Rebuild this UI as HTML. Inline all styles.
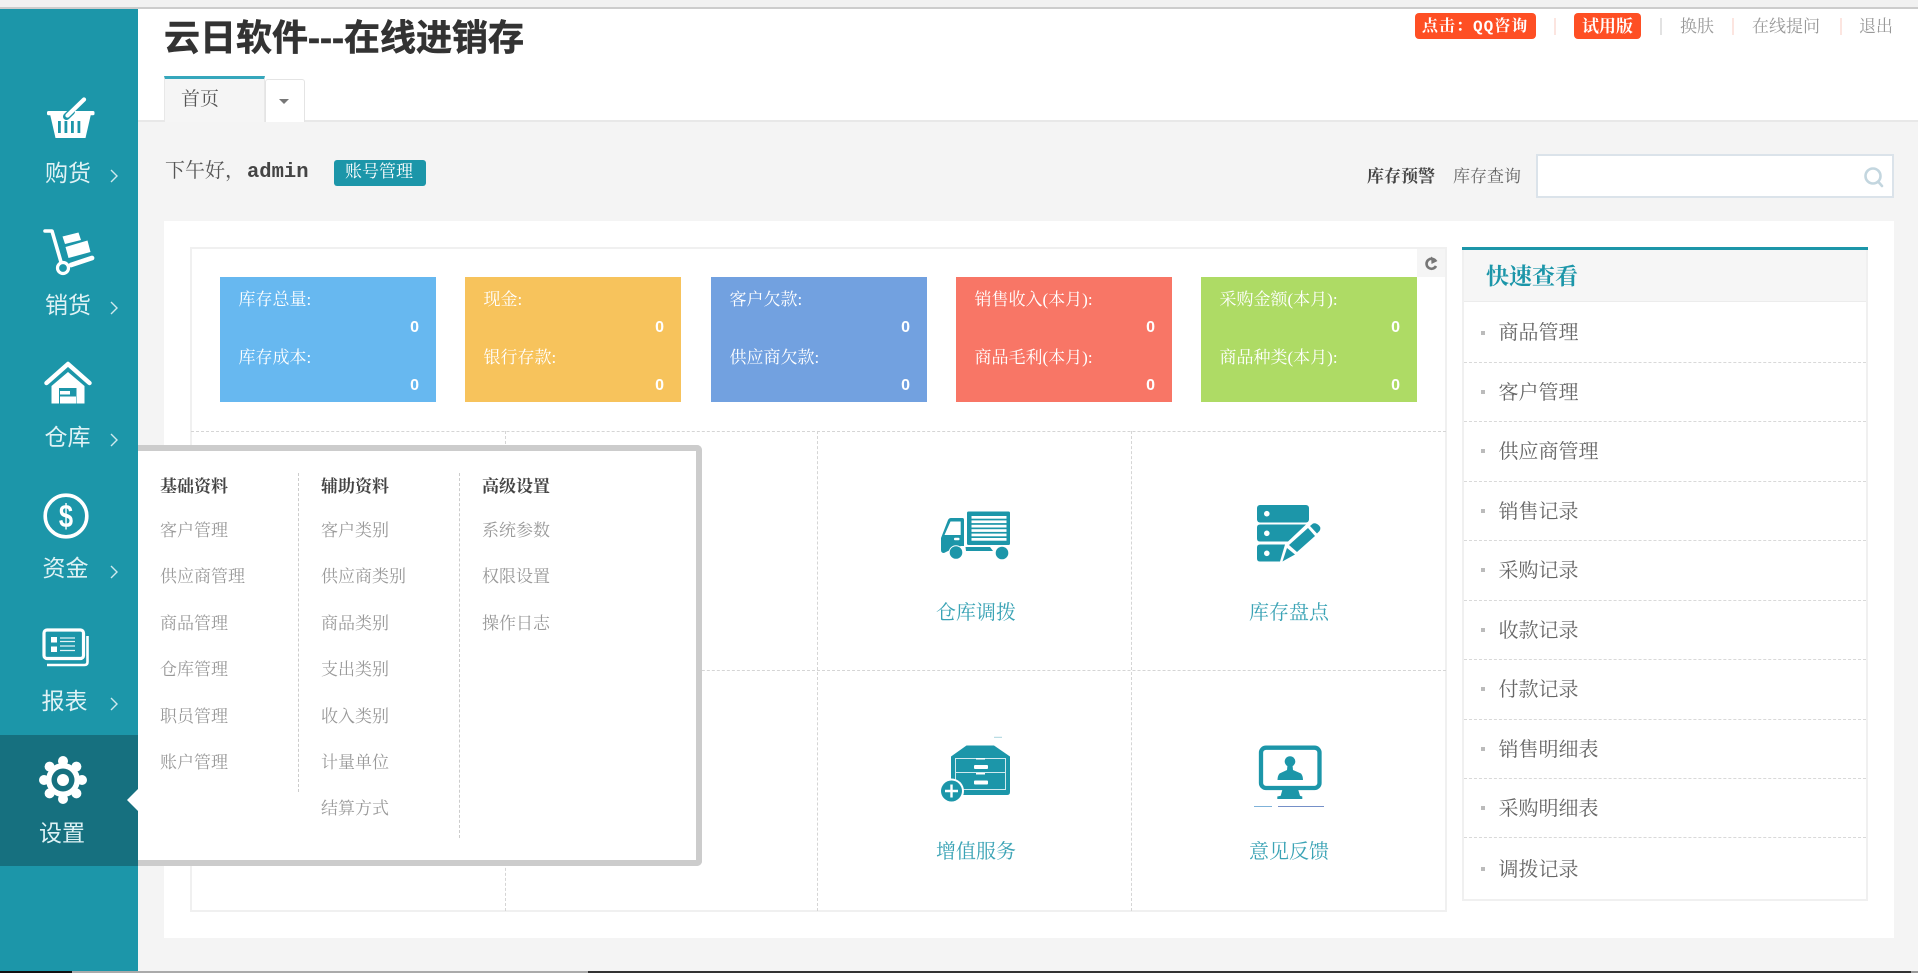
<!DOCTYPE html>
<html lang="zh"><head><meta charset="utf-8"><title>云日软件</title>
<style>
html,body{margin:0;padding:0;width:1918px;height:973px;overflow:hidden;background:#f4f4f4}
body{position:relative;font-family:"Liberation Serif","Noto Serif CJK SC",serif}
div,span.t{position:absolute;box-sizing:border-box}
.t{position:absolute;white-space:nowrap;line-height:1}
.s{font-family:"Liberation Sans","Noto Sans CJK SC",sans-serif}
.side{color:#dff2f5;font-size:23px;font-family:"Liberation Sans","Noto Sans CJK SC",sans-serif}
.card{top:277px;width:216px;height:125px}
.lab{color:#fff;font-size:17px;left:18.500px}
.val{color:#fff;font:bold 16px "Liberation Sans",sans-serif;right:17px}
.pi{color:#999;font-size:17px}
.ph{color:#444;font-size:17px;font-weight:bold}
.qi{color:#666;font-size:20px;left:1499px}
.bul{left:1481px;width:4px;height:4px;background:#bbb}
.qs{left:1464px;width:402px;border-top:1px dashed #d9d9d9;height:0}
.gl{color:#3aa3b5;font-size:20px}
.sep{top:18px;width:2px;height:17px}
.lnk{color:#999;font-size:17px;top:18px}
</style></head><body>
<div style="left:0;top:0;width:1918px;height:7px;background:#f1f1f1"></div>
<div style="left:0;top:7px;width:1918px;height:2px;background:#ccc"></div>
<div style="left:138px;top:9px;width:1780px;height:113px;background:#fff;border-bottom:2px solid #e8e8e8"></div>

<span class="t s" style="left:164px;top:20px;font-size:36px;font-weight:bold;color:#333;-webkit-text-stroke:.6px #333">云日软件---在线进销存</span>

<div style="left:164px;top:76px;width:101px;height:46px;background:#f5f5f5;border-top:3px solid #36a7bc;border-left:1px solid #e8e8e8;border-right:1px solid #e8e8e8"></div>
<span class="t" style="left:181px;top:90px;font-size:19px;color:#555">首页</span>
<div style="left:265px;top:79px;width:40px;height:43px;background:#fff;border:1px solid #e4e4e4;border-bottom:0;border-radius:3px 3px 0 0"></div>
<div style="left:279px;top:99px;width:0;height:0;border-left:5px solid transparent;border-right:5px solid transparent;border-top:5px solid #777"></div>

<div style="left:1415px;top:13px;width:121px;height:26px;background:#fe4f24;border-radius:4px"></div>
<span class="t" style="left:1422px;top:19px;font-size:16px;letter-spacing:1px;font-weight:bold;color:#fff;font-family:'Liberation Mono','Noto Serif CJK SC',serif">点击：QQ咨询</span>
<div style="left:1574px;top:13px;width:67px;height:26px;background:#fe4f24;border-radius:4px"></div>
<span class="t" style="left:1582px;top:18px;font-size:17px;font-weight:bold;color:#fff">试用版</span>
<div class="sep" style="left:1554px;background:#fce5e0"></div>
<div class="sep" style="left:1660px;background:#e2e2e2"></div>
<div class="sep" style="left:1732px;background:#fce5e0"></div>
<div class="sep" style="left:1840px;background:#fce5e0"></div>
<span class="t lnk" style="left:1680px">换肤</span>
<span class="t lnk" style="left:1752px">在线提问</span>
<span class="t lnk" style="left:1859px">退出</span>

<span class="t" style="left:165px;top:161px;font-size:20px;color:#555">下午好，</span>
<span class="t" style="left:247px;top:161px;font:bold 20.500px 'Liberation Mono',monospace;color:#444">admin</span>
<div style="left:334px;top:160px;width:92px;height:26px;background:#1c96a9;border-radius:3px"></div>
<span class="t" style="left:345px;top:163px;font-size:17px;color:#fff">账号管理</span>

<span class="t" style="left:1367px;top:168px;font-size:17px;font-weight:bold;color:#444">库存预警</span>
<span class="t" style="left:1453px;top:168px;font-size:17px;color:#666">库存查询</span>
<div style="left:1536px;top:154px;width:358px;height:44px;background:#fff;border:2px solid #dbe3ea"></div>

<div style="left:164px;top:221px;width:1730px;height:717px;background:#fff"></div>
<div style="left:190px;top:247px;width:1257px;height:665px;border:2px solid #f0f0f0"></div>
<div style="left:1417px;top:249px;width:28px;height:28px;background:#f5f5f5"></div>

<div class="card" style="left:220px;background:#67b8f0">
<span class="t lab" style="top:14px">库存总量:</span><span class="t val" style="top:42px">0</span>
<span class="t lab" style="top:72px">库存成本:</span><span class="t val" style="top:100px">0</span></div>
<div class="card" style="left:465px;background:#f7c35c">
<span class="t lab" style="top:14px">现金:</span><span class="t val" style="top:42px">0</span>
<span class="t lab" style="top:72px">银行存款:</span><span class="t val" style="top:100px">0</span></div>
<div class="card" style="left:711px;background:#72a1e0">
<span class="t lab" style="top:14px">客户欠款:</span><span class="t val" style="top:42px">0</span>
<span class="t lab" style="top:72px">供应商欠款:</span><span class="t val" style="top:100px">0</span></div>
<div class="card" style="left:956px;background:#f87666">
<span class="t lab" style="top:14px">销售收入(本月):</span><span class="t val" style="top:42px">0</span>
<span class="t lab" style="top:72px">商品毛利(本月):</span><span class="t val" style="top:100px">0</span></div>
<div class="card" style="left:1201px;background:#aedb65">
<span class="t lab" style="top:14px">采购金额(本月):</span><span class="t val" style="top:42px">0</span>
<span class="t lab" style="top:72px">商品种类(本月):</span><span class="t val" style="top:100px">0</span></div>

<div style="left:191px;top:431px;width:1255px;height:0;border-top:1px dashed #d5d5d5"></div>
<div style="left:191px;top:670px;width:1255px;height:0;border-top:1px dashed #d5d5d5"></div>
<div style="left:505px;top:431px;width:0;height:480px;border-left:1px dashed #d5d5d5"></div>
<div style="left:817px;top:431px;width:0;height:480px;border-left:1px dashed #d5d5d5"></div>
<div style="left:1131px;top:431px;width:0;height:480px;border-left:1px dashed #d5d5d5"></div>
<span class="t gl" style="left:936px;top:603px">仓库调拨</span>
<span class="t gl" style="left:1249px;top:603px">库存盘点</span>
<span class="t gl" style="left:936px;top:842px">增值服务</span>
<span class="t gl" style="left:1249px;top:842px">意见反馈</span>

<div style="left:1462px;top:247px;width:406px;height:654px;background:#fff;border:2px solid #f0f0f0;border-top:0"></div>
<div style="left:1462px;top:247px;width:406px;height:3px;background:#1c96a9"></div>
<div style="left:1464px;top:250px;width:402px;height:52px;background:#f6f6f6;border-bottom:1px solid #ececec"></div>
<span class="t" style="left:1486px;top:265px;font-size:23px;color:#1c96a9;font-weight:bold">快速查看</span>
<div class="qs" style="top:362px"></div><div class="qs" style="top:421px"></div><div class="qs" style="top:481px"></div><div class="qs" style="top:540px"></div><div class="qs" style="top:600px"></div><div class="qs" style="top:659px"></div><div class="qs" style="top:719px"></div><div class="qs" style="top:778px"></div><div class="qs" style="top:837px"></div>
<div class="bul" style="top:331px"></div><span class="t qi" style="left:1498.500px;top:323px">商品管理</span>
<div class="bul" style="top:390px"></div><span class="t qi" style="left:1498.500px;top:383px">客户管理</span>
<div class="bul" style="top:449px"></div><span class="t qi" style="left:1498.500px;top:442px">供应商管理</span>
<div class="bul" style="top:509px"></div><span class="t qi" style="left:1498.500px;top:502px">销售记录</span>
<div class="bul" style="top:568px"></div><span class="t qi" style="left:1498.500px;top:561px">采购记录</span>
<div class="bul" style="top:628px"></div><span class="t qi" style="left:1498.500px;top:621px">收款记录</span>
<div class="bul" style="top:687px"></div><span class="t qi" style="left:1498.500px;top:680px">付款记录</span>
<div class="bul" style="top:747px"></div><span class="t qi" style="left:1498.500px;top:740px">销售明细表</span>
<div class="bul" style="top:806px"></div><span class="t qi" style="left:1498.500px;top:799px">采购明细表</span>
<div class="bul" style="top:867px"></div><span class="t qi" style="left:1498.500px;top:860px">调拨记录</span>

<div style="left:0;top:9px;width:138px;height:964px;background:#1c96a9"></div>
<div style="left:0;top:735px;width:138px;height:131px;background:#16707f"></div>
<span class="t side" style="left:45px;top:162px">购货</span>
<span class="t side" style="left:45px;top:294px">销货</span>
<span class="t side" style="left:44.500px;top:426px">仓库</span>
<span class="t side" style="left:42.500px;top:557px">资金</span>
<span class="t side" style="left:41.500px;top:690px">报表</span>
<span class="t side" style="left:39px;top:822px">设置</span>

<div style="left:138px;top:445px;width:564px;height:421px;background:#fff;border:6px solid #ccc;border-left:0;border-radius:0 5px 5px 0"></div>
<div style="left:298px;top:473px;width:0;height:319px;border-left:1px dashed #ccc"></div>
<div style="left:459px;top:473px;width:0;height:365px;border-left:1px dashed #ccc"></div>
<span class="t ph" style="left:160px;top:478px">基础资料</span>
<span class="t ph" style="left:321px;top:478px">辅助资料</span>
<span class="t ph" style="left:482px;top:478px">高级设置</span>
<span class="t pi" style="left:160px;top:522px">客户管理</span>
<span class="t pi" style="left:160px;top:568px">供应商管理</span>
<span class="t pi" style="left:160px;top:615px">商品管理</span>
<span class="t pi" style="left:160px;top:661px">仓库管理</span>
<span class="t pi" style="left:160px;top:708px">职员管理</span>
<span class="t pi" style="left:160px;top:754px">账户管理</span>
<span class="t pi" style="left:321px;top:522px">客户类别</span>
<span class="t pi" style="left:321px;top:568px">供应商类别</span>
<span class="t pi" style="left:321px;top:615px">商品类别</span>
<span class="t pi" style="left:321px;top:661px">支出类别</span>
<span class="t pi" style="left:321px;top:708px">收入类别</span>
<span class="t pi" style="left:321px;top:754px">计量单位</span>
<span class="t pi" style="left:321px;top:800px">结算方式</span>
<span class="t pi" style="left:482px;top:522px">系统参数</span>
<span class="t pi" style="left:482px;top:568px">权限设置</span>
<span class="t pi" style="left:482px;top:615px">操作日志</span>

<svg style="position:absolute;left:0;top:0" width="1918" height="973" viewBox="0 0 1918 973">
<!-- notch -->
<path d="M138 789L127 800L138 811Z" fill="#fff"/>
<!-- chevrons -->
<g fill="none" stroke="#cfe9ee" stroke-width="1.400">
<path d="M111 170l6 6-6 6"/><path d="M111 302l6 6-6 6"/><path d="M111 434l6 6-6 6"/><path d="M111 566l6 6-6 6"/><path d="M111 698l6 6-6 6"/>
</g>
<!-- basket -->
<g fill="#fff">
<rect x="47" y="111" width="47.500" height="4.200" rx="1.500"/>
<path d="M50 114H91L85.500 138H55.500Z"/>
<path d="M66.500 116.500L84 99.500" stroke="#1c96a9" stroke-width="7" stroke-linecap="round" stroke-dasharray="7 100"/>
<path d="M67.500 115.500L84 99.500" stroke="#fff" stroke-width="4.300" stroke-linecap="round"/>
<g fill="#1c96a9"><rect x="58" y="121" width="2.800" height="12"/><rect x="64.500" y="121" width="2.800" height="12"/><rect x="71" y="121" width="2.800" height="12"/><rect x="77.500" y="121" width="2.800" height="12"/></g>
</g>
<!-- cart -->
<g>
<path d="M45 231H52L61 262" fill="none" stroke="#fff" stroke-width="3.600" stroke-linecap="round" stroke-linejoin="round"/>
<circle cx="63" cy="268" r="5.500" fill="none" stroke="#fff" stroke-width="3.200"/>
<path d="M71 265L92 258" stroke="#fff" stroke-width="4.800" stroke-linecap="round"/>
<path d="M62.500 236.500L78.500 232.500L81 240L65 244Z" fill="#fff"/>
<path d="M65.500 247L87.500 240.500L90.500 252L68.500 258Z" fill="#fff"/>
</g>
<!-- house -->
<g>
<path d="M46.500 383L68 364L89.500 383" fill="none" stroke="#fff" stroke-width="4.500" stroke-linecap="round" stroke-linejoin="round"/>
<path d="M51.500 386L68 372L84.500 386V403.500H76.500V388H59V403.500H51.500Z" fill="#fff"/>
<rect x="60" y="391" width="10" height="3.500" fill="#fff"/><rect x="60" y="396.500" width="16" height="7" fill="#fff"/>
</g>
<!-- dollar -->
<circle cx="66" cy="516" r="20.800" fill="none" stroke="#fff" stroke-width="3.600"/>
<text transform="translate(66 527) scale(.85 1.080)" text-anchor="middle" font-family="Liberation Sans" font-weight="bold" font-size="30" fill="#fff">$</text>
<!-- report -->
<g fill="none" stroke="#fff">
<rect x="44" y="630" width="39.500" height="28.500" rx="3" stroke-width="3.200"/>
<path d="M87.500 636V662Q87.500 665 84.500 665H47" stroke-width="2.600"/>
<g stroke-width="1.300" stroke="#e4f4f6"><path d="M60 638H75M60 641.500H75M60 646H75M60 650.500H75"/></g>
</g>
<rect x="51" y="637" width="6" height="5.500" fill="#fff"/><rect x="51" y="646.500" width="6" height="5.500" fill="#fff"/>
<!-- gear -->
<g fill="#fff">
<circle cx="63" cy="780" r="17"/>
<circle cx="63" cy="761" r="5"/><circle cx="63" cy="799" r="5"/><circle cx="44" cy="780" r="5"/><circle cx="82" cy="780" r="5"/>
<circle cx="49.600" cy="766.600" r="5"/><circle cx="76.400" cy="766.600" r="5"/><circle cx="49.600" cy="793.400" r="5"/><circle cx="76.400" cy="793.400" r="5"/>
<circle cx="63" cy="780" r="11.500" fill="#16707f"/><circle cx="63" cy="780" r="6"/>
</g>
<!-- magnifier -->
<g fill="none" stroke="#c3d6df" stroke-width="2.600"><circle cx="1873" cy="176" r="7.500"/><path d="M1878.500 182L1882 186" stroke-linecap="round"/></g>
<!-- refresh -->
<path d="M1436 261.500A5 5 0 1 0 1436 266" fill="none" stroke="#777" stroke-width="2.600"/>
<path d="M1431 256.500L1437.500 261L1431.500 264Z" fill="#777"/>
<!-- truck -->
<g fill="#1c96a9">
<rect x="967" y="511.500" width="43" height="33.500" rx="1.500"/>
<g fill="#fff"><rect x="971.500" y="516" width="35" height="2.700"/><rect x="971.500" y="520.400" width="35" height="2.700"/><rect x="971.500" y="524.800" width="35" height="2.700"/><rect x="971.500" y="529.200" width="35" height="2.700"/><rect x="971.500" y="533.600" width="35" height="2.700"/><rect x="971.500" y="538" width="35" height="2.700"/></g>
<path d="M941 538L948 520Q949 518 951 518H962.500Q964 518 964 520V546H961L952 549L944 553Q941 553 941 550Z"/>
<path d="M944.500 535L950.500 521.500H960.700V535Z" fill="#fff"/>
<rect x="954" y="537.800" width="5.500" height="2.500" rx="1" fill="#fff"/>
<circle cx="956" cy="552.500" r="6.800" stroke="#fff" stroke-width="1"/><circle cx="1002" cy="553" r="6.300"/>
<path d="M965.500 547H990L993 551H966Z"/>
</g>
<!-- server pencil -->
<g fill="#1c96a9">
<rect x="1257" y="505" width="52" height="17.500" rx="3"/>
<path d="M1260 524.500H1306L1288 541.500H1260Q1257 541.500 1257 538.500V527.500Q1257 524.500 1260 524.500Z"/>
<path d="M1260 544.500H1285L1280 561.500H1260Q1257 561.500 1257 558.500V547.500Q1257 544.500 1260 544.500Z"/>
<g fill="#fff"><circle cx="1266.800" cy="513.700" r="2.800"/><circle cx="1266.800" cy="533.300" r="2.800"/><circle cx="1266.800" cy="553.300" r="2.800"/></g>
<path d="M1289 545L1308 528L1315 536L1297 552Z"/>
<path d="M1310 526L1313 523.500Q1316 522.500 1319 525.500Q1321.500 528 1319.500 531L1317 533.500Z"/>
<path d="M1287 548L1295 554.500L1285 560L1282.500 561.500Z"/>
</g>
<!-- drawer -->
<g fill="#1c96a9">
<path d="M966.500 745.500H994L1010 756.500V792Q1010 795 1007 795H955Q951 795 951 791V756.500Z"/>
<path d="M955.500 758.500H1005.500V789.500H955.500Z M955.500 772.500H1005.500" fill="none" stroke="#cfe9ee" stroke-width="1"/>
<g fill="#fff"><rect x="974" y="765" width="14" height="4" rx="1"/><rect x="974" y="780.500" width="14" height="4" rx="1"/><rect x="976" y="758" width="9" height="1.500"/><rect x="976" y="773" width="9" height="1.500"/></g>
<circle cx="951.500" cy="791" r="12.500" fill="#fff"/><circle cx="951.500" cy="791" r="10.500"/>
<path d="M945 791H958M951.500 784.500V797.500" stroke="#fff" stroke-width="2.400"/>
<rect x="994" y="736.800" width="8" height="1" fill="#a9d5dd"/>
</g>
<!-- monitor -->
<g fill="#1c96a9">
<rect x="1261" y="747.700" width="58.500" height="40.300" rx="5" fill="none" stroke="#1c96a9" stroke-width="4.300"/>
<path d="M1282.300 790H1298.300L1300 795.700L1302.300 796.500V799H1277.300V796.500L1280.700 795.700Z"/>
<circle cx="1290" cy="761.500" r="5.300"/>
<path d="M1287.500 765H1292.500L1293 770L1301 773.500Q1303 776 1303 780H1277.500Q1277.500 776 1279.500 773.500L1287 770Z"/>
</g>
<rect x="1254" y="806" width="18" height="1" fill="#7fb2d9"/><rect x="1278" y="806" width="46" height="1" fill="#7590c8"/>
</svg>

<div style="left:0;top:971px;width:72px;height:2px;background:#111"></div>
<div style="left:72px;top:971px;width:516px;height:2px;background:#aaa"></div>
<div style="left:588px;top:971px;width:1323px;height:2px;background:#333"></div>
<div style="left:1911px;top:971px;width:7px;height:2px;background:#999"></div>
</body></html>
